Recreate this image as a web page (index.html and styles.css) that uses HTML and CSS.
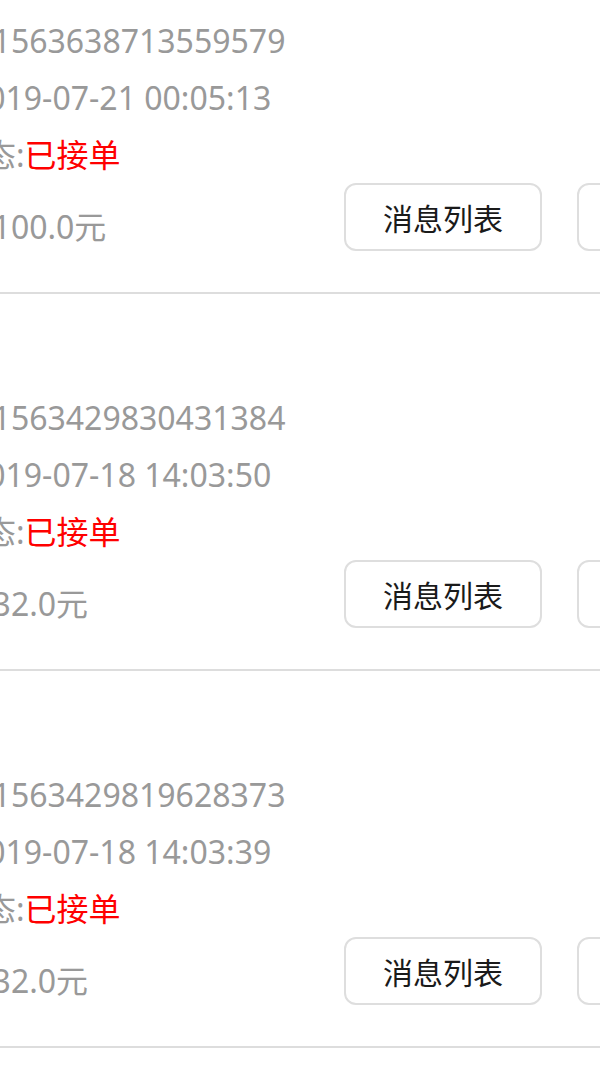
FILE: index.html
```html
<!DOCTYPE html>
<html lang="zh-CN">
<head>
    <meta charset="UTF-8">
    <meta name="viewport" content="width=device-width, initial-scale=1.0">
    <title>我的订单</title>
    <link rel="stylesheet" href="styles.css">
</head>
<body>
    <main class="order-list">
        <div class="order-card">
            <div class="line"><span>订单号:</span>1563638713559579</div>
            <div class="line"><span>时间:&nbsp;</span>2019-07-21 00:05:13</div>
            <div class="line"><span>订单状态:</span><span class="state">已接单</span></div>
            <div class="bottom">
                <div class="line price"><span>总金额:</span>100.0元</div>
                <button class="btn">消息列表</button>
                <button class="btn">确认完成</button>
            </div>
        </div>

        <div class="order-card">
            <div class="line"><span>订单号:</span>1563429830431384</div>
            <div class="line"><span>时间:&nbsp;</span>2019-07-18 14:03:50</div>
            <div class="line"><span>订单状态:</span><span class="state">已接单</span></div>
            <div class="bottom">
                <div class="line price"><span>总金额:</span>32.0元</div>
                <button class="btn">消息列表</button>
                <button class="btn">确认完成</button>
            </div>
        </div>

        <div class="order-card">
            <div class="line"><span>订单号:</span>1563429819628373</div>
            <div class="line"><span>时间:&nbsp;</span>2019-07-18 14:03:39</div>
            <div class="line"><span>订单状态:</span><span class="state">已接单</span></div>
            <div class="bottom">
                <div class="line price"><span>总金额:</span>32.0元</div>
                <button class="btn">消息列表</button>
                <button class="btn">确认完成</button>
            </div>
        </div>

        <div class="order-card">
            <div class="line"><span>订单号:</span>1563429807214456</div>
            <div class="line"><span>时间:&nbsp;</span>2019-07-18 14:03:27</div>
        </div>
    </main>
</body>
</html>
```

FILE: styles.css
```css
html, body{
    margin: 0;
    overflow: hidden;
    background: #ffffff;
}
body{
    font-family: "Noto Sans", "Noto Sans CJK SC", sans-serif;
}

/* list is scrolled a bit, and wider than the screen */
.order-list{
    margin-top: -83px;
    margin-left: -112px;
    width: 912px;
}

.order-card{
    box-sizing: border-box;
    padding: 95px 25px 37px 0;
    border-bottom: 2px solid #dddddd;
}

.line{
    font-size: 32px;
    line-height: 57px;
    height: 57px;
    color: #999999;
    white-space: nowrap;
}
.state{
    color: #ff0000;
}

.bottom{
    display: flex;
    align-items: flex-start;
    gap: 35px;
}
.price{
    flex: 1 1 auto;
    margin-top: 15px;
}

.btn{
    flex: 0 0 auto;
    width: 198px;
    height: 68px;
    padding: 0;
    background: #ffffff;
    border: 2px solid #dedede;
    border-radius: 12px;
    font-family: "Noto Sans", "Noto Sans CJK SC", sans-serif;
    font-size: 30px;
    color: #1a1a1a;
}
```
